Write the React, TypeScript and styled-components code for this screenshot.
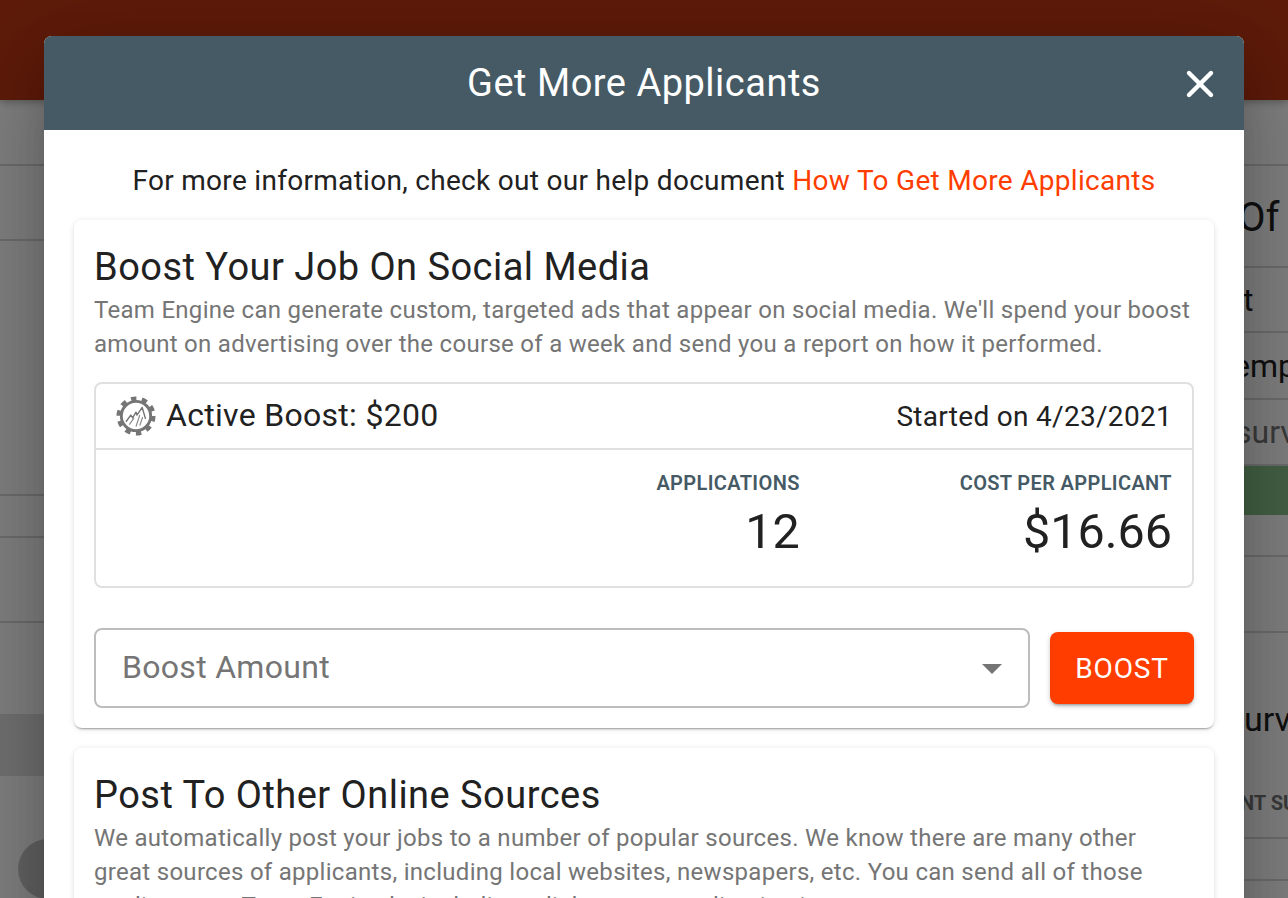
import styled, { createGlobalStyle } from "styled-components";
import { X } from "lucide-react";

const GlobalStyle = createGlobalStyle`
  html, body {
    margin: 0;
    padding: 0;
    height: 100%;
    overflow: hidden;
    background: #fff;
    font-family: Roboto, "Liberation Sans", sans-serif;
  }
  * {
    box-sizing: border-box;
  }
`;

const leftRows = [66, 75, 255, 42, 85];

const rightRows = [
  { h: 102, top: 3, text: "Of", size: 40, indent: 594, color: "#212121" },
  { h: 65, top: 0, text: "t", size: 32, indent: 599, color: "#212121" },
  { h: 67, top: 0, text: "emp", size: 32, indent: 589, color: "#212121" },
  { h: 66, top: 0, text: "surv", size: 32, indent: 591, color: "#757575" },
];

const LogoIcon = () => (
  <svg width="40" height="40" viewBox="0 0 42 42" fill="none">
    <circle cx="21" cy="21" r="18" stroke="#757575" strokeWidth="5" strokeDasharray="5.6 5.7" />
    <circle cx="21" cy="21" r="15.4" stroke="#757575" strokeWidth="3" />
    <path
      d="M10.5 27 L15.5 20 L17.5 23 L21 17 L22 20 L27.5 12 L31 24"
      stroke="#757575"
      strokeWidth="1.5"
      strokeLinejoin="round"
    />
    <path d="M14 30 L19 23 M21 32 L25 20 M25 31 L28 22" stroke="#8a8a8a" strokeWidth="1.2" />
  </svg>
);

const App = () => {
  return (
    <>
      <GlobalStyle />
      <Page>
        <TopBar />
        <Columns>
          <Column>
            {leftRows.map((h, i) => (
              <Row key={i} $h={h} />
            ))}
            <Spacer $h={91} />
            <DarkBand />
            <Spacer $h={63} />
            <Pill />
          </Column>
          <Column>
            <Row $h={66} />
            {rightRows.map((r) => (
              <Row key={r.text} $h={r.h} $top={r.top}>
                <RowText $size={r.size} $indent={r.indent} $color={r.color}>
                  {r.text}
                </RowText>
              </Row>
            ))}
            <GreenBar />
            <Row $h={42} />
            <Row $h={76} />
            <Spacer $h={150} $top={22}>
              <RowText $size={34} $indent={600} $color="#212121">
                urv
              </RowText>
            </Spacer>
            <Spacer $h={40}>
              <ColumnLabel>NT SU</ColumnLabel>
            </Spacer>
            <Row $h={16} />
            <Row $h={42} />
          </Column>
        </Columns>
        <Overlay />
        <Dialog>
          <DialogHeader>
            <DialogTitle>Get More Applicants</DialogTitle>
            <CloseButton>
              <X size={44} strokeWidth={2.4} color="#fff" />
            </CloseButton>
          </DialogHeader>
          <DialogBody>
            <HelpLine>
              For more information, check out our help document <HelpLink>How To Get More Applicants</HelpLink>
            </HelpLine>
            <Card>
              <CardTitle>Boost Your Job On Social Media</CardTitle>
              <CardText>
                Team Engine can generate custom, targeted ads that appear on social media. We'll spend your boost
                amount on advertising over the course of a week and send you a report on how it performed.
              </CardText>
              <BoostBox>
                <BoostHead>
                  <BoostName>
                    <LogoIcon />
                    <BoostLabel>Active Boost: $200</BoostLabel>
                  </BoostName>
                  <BoostDate>Started on 4/23/2021</BoostDate>
                </BoostHead>
                <Stats>
                  <Stat>
                    <StatLabel>Applications</StatLabel>
                    <StatValue>12</StatValue>
                  </Stat>
                  <Stat>
                    <StatLabel>Cost Per Applicant</StatLabel>
                    <StatValue>$16.66</StatValue>
                  </Stat>
                </Stats>
              </BoostBox>
              <BoostForm>
                <SelectBox>
                  Boost Amount
                  <Caret />
                </SelectBox>
                <BoostButton>Boost</BoostButton>
              </BoostForm>
            </Card>
            <Card>
              <CardTitle>Post To Other Online Sources</CardTitle>
              <CardText>
                We automatically post your jobs to a number of popular sources. We know there are many other great
                sources of applicants, including local websites, newspapers, etc. You can send all of those
                applicants to Team Engine by including a link to your application in your
              </CardText>
            </Card>
          </DialogBody>
        </Dialog>
      </Page>
    </>
  );
};

export default App;

const Page = styled.div`
  position: relative;
  height: 100vh;
  overflow: hidden;
  background: #fff;
`;

const TopBar = styled.div`
  position: relative;
  height: 100px;
  background: #bd3714;
  box-shadow: 0 2px 8px rgba(0, 0, 0, 0.3);
`;

const Columns = styled.div`
  display: grid;
  grid-template-columns: 644px 644px;
`;

const Column = styled.div`
  display: flex;
  flex-direction: column;
`;

const Row = styled.div<{ $h: number; $top?: number }>`
  height: ${(p) => p.$h}px;
  flex: none;
  display: flex;
  align-items: center;
  padding-top: ${(p) => p.$top ?? 0}px;
  border-bottom: 2px solid #d8d8d8;
  white-space: nowrap;
`;

const Spacer = styled.div<{ $h: number; $top?: number }>`
  height: ${(p) => p.$h}px;
  flex: none;
  display: flex;
  align-items: center;
  padding-top: ${(p) => p.$top ?? 0}px;
  white-space: nowrap;
`;

const RowText = styled.span<{ $size: number; $indent: number; $color: string }>`
  padding-left: ${(p) => p.$indent}px;
  font-size: ${(p) => p.$size}px;
  color: ${(p) => p.$color};
`;

const ColumnLabel = styled.span`
  padding-left: 596px;
  font-size: 20px;
  font-weight: 700;
  color: #757575;
`;

const GreenBar = styled.div`
  height: 49px;
  flex: none;
  background: #86c089;
`;

const DarkBand = styled.div`
  height: 62px;
  flex: none;
  background: #e0e0e0;
`;

const Pill = styled.div`
  width: 120px;
  height: 60px;
  flex: none;
  margin-left: 18px;
  border-radius: 30px;
  background: #c4c4c4;
`;

const Overlay = styled.div`
  position: absolute;
  inset: 0;
  background: rgba(0, 0, 0, 0.5);
`;

const Dialog = styled.div`
  position: absolute;
  top: 36px;
  left: 44px;
  width: 1200px;
  bottom: -60px;
  border-radius: 8px 8px 0 0;
  background: #fff;
  overflow: hidden;
  box-shadow: 0 22px 30px -14px rgba(0, 0, 0, 0.2), 0 48px 76px 6px rgba(0, 0, 0, 0.14),
    0 18px 92px 16px rgba(0, 0, 0, 0.12);
`;

const DialogHeader = styled.div`
  position: relative;
  height: 94px;
  display: flex;
  align-items: center;
  justify-content: center;
  background: #455a64;
`;

const DialogTitle = styled.h2`
  margin: 0;
  font-size: 38px;
  font-weight: 400;
  letter-spacing: 0.5px;
  color: #fff;
`;

const CloseButton = styled.div`
  position: absolute;
  right: 22px;
  top: 26px;
  display: flex;
`;

const DialogBody = styled.div`
  display: flex;
  flex-direction: column;
  gap: 20px;
  padding: 0 30px;
`;

const HelpLine = styled.div`
  height: 90px;
  margin-bottom: -20px;
  padding-top: 34px;
  text-align: center;
  font-size: 28px;
  line-height: 34px;
  letter-spacing: 0.3px;
  color: #212121;
`;

const HelpLink = styled.span`
  color: #ff3d00;
`;

const Card = styled.div`
  padding: 23px 20px 20px;
  border-radius: 8px;
  background: #fff;
  box-shadow: 0 2px 2px -1px rgba(0, 0, 0, 0.35), 0 1px 6px rgba(0, 0, 0, 0.12);
`;

const CardTitle = styled.h3`
  margin: 0 0 2px;
  font-size: 38px;
  line-height: 48px;
  font-weight: 400;
  letter-spacing: 0.47px;
  color: #212121;
`;

const CardText = styled.p`
  margin: 0;
  font-size: 24px;
  line-height: 34px;
  letter-spacing: 0.29px;
  color: #757575;
`;

const BoostBox = styled.div`
  margin-top: 21px;
  height: 206px;
  border: 2px solid #e0e0e0;
  border-radius: 8px;
`;

const BoostHead = styled.div`
  height: 66px;
  display: flex;
  align-items: center;
  justify-content: space-between;
  padding: 0 20px;
  border-bottom: 2px solid #e0e0e0;
`;

const BoostName = styled.div`
  display: flex;
  align-items: center;
  gap: 10px;
`;

const BoostLabel = styled.span`
  padding-bottom: 2px;
  font-size: 32px;
  line-height: 38px;
  letter-spacing: 0.3px;
  color: #212121;
`;

const BoostDate = styled.div`
  font-size: 28px;
  letter-spacing: 0.3px;
  color: #212121;
`;

const Stats = styled.div`
  display: flex;
  justify-content: flex-end;
  gap: 160px;
  padding: 19px 20px 0;
`;

const Stat = styled.div`
  display: flex;
  flex-direction: column;
  align-items: flex-end;
`;

const StatLabel = styled.div`
  font-size: 20px;
  line-height: 28px;
  font-weight: 600;
  letter-spacing: 0.36px;
  text-transform: uppercase;
  color: #455a64;
`;

const StatValue = styled.div`
  margin-top: 7px;
  font-size: 48.5px;
  line-height: 56px;
  color: #212121;
`;

const BoostForm = styled.div`
  display: flex;
  align-items: center;
  gap: 20px;
  margin-top: 40px;
`;

const SelectBox = styled.div`
  position: relative;
  flex: 1;
  height: 80px;
  display: flex;
  align-items: center;
  padding: 0 0 2px 26px;
  border: 2px solid #bdbdbd;
  border-radius: 8px;
  font-size: 32px;
  letter-spacing: 0.3px;
  color: #757575;
`;

const Caret = styled.span`
  position: absolute;
  right: 26px;
  top: 34px;
  border-left: 10px solid transparent;
  border-right: 10px solid transparent;
  border-top: 10px solid #757575;
`;

const BoostButton = styled.div`
  width: 144px;
  height: 72px;
  display: flex;
  align-items: center;
  justify-content: center;
  border-radius: 8px;
  background: #ff3d00;
  box-shadow: 0 3px 3px -2px rgba(0, 0, 0, 0.3), 0 2px 5px rgba(0, 0, 0, 0.2);
  font-size: 28px;
  letter-spacing: 0.8px;
  text-transform: uppercase;
  color: #fff;
`;
